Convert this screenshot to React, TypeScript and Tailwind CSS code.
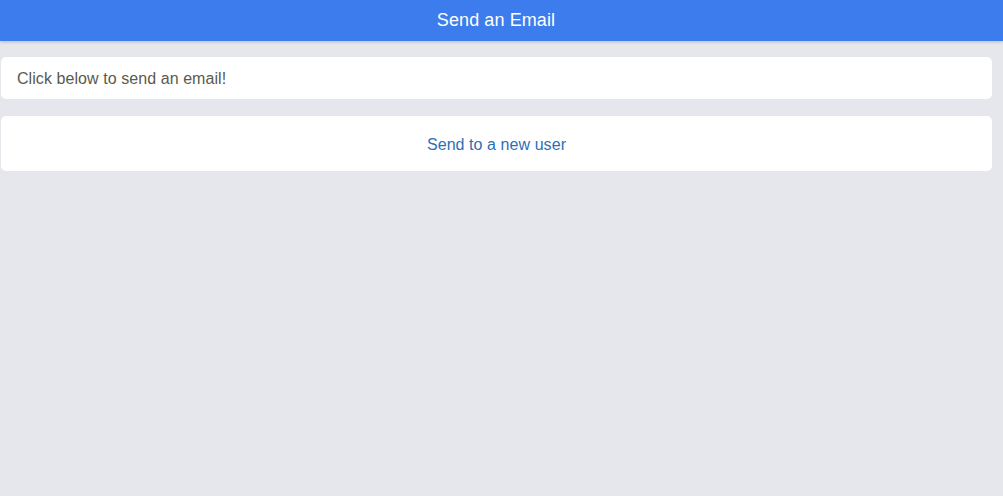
export default function App() {
  return (
    <div className="min-h-[496px] bg-[#e6e7ec] font-['Liberation_Sans',Arial,sans-serif]">
      <header className="h-[41px] bg-[#3c7ced] flex items-center justify-center pr-[11px] shadow-[0_1px_3px_rgba(0,0,0,0.2)]">
        <h1 className="text-white text-[18px] tracking-[0.1px]">Send an Email</h1>
      </header>

      <div className="pt-4 pl-[1px] w-[992px] flex flex-col gap-[17px]">
        <div className="bg-white rounded-[5px] h-[42px] flex items-center px-4 pt-[2px] text-[16px] tracking-[0.07px] text-[#5a5a4e]">
          Click below to send an email!
        </div>
        <button className="bg-white rounded-[5px] h-[55px] flex items-center justify-center pt-[2px] text-[16px] tracking-[0.07px] text-[#2d6fb7]">
          Send to a new user
        </button>
      </div>
    </div>
  );
}
